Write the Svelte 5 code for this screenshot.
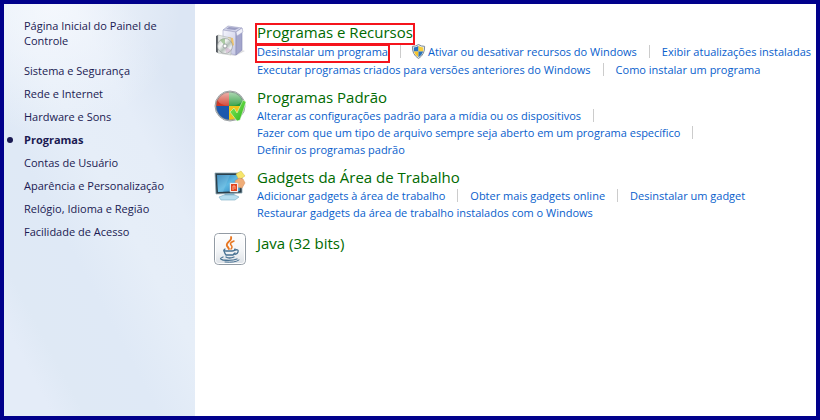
<script>
  const categories = [
    'Sistema e Segurança',
    'Rede e Internet',
    'Hardware e Sons',
    'Programas',
    'Contas de Usuário',
    'Aparência e Personalização',
    'Relógio, Idioma e Região',
    'Facilidade de Acesso'
  ]

  const current = 'Programas'

  const groups = [
    {
      icon: 'box',
      title: 'Programas e Recursos',
      marked: true,
      rows: [
        [
          { text: 'Desinstalar um programa', marked: true },
          { text: 'Ativar ou desativar recursos do Windows', shield: true },
          { text: 'Exibir atualizações instaladas' }
        ],
        [
          { text: 'Executar programas criados para versões anteriores do Windows' },
          { text: 'Como instalar um programa' }
        ]
      ]
    },
    {
      icon: 'defaults',
      title: 'Programas Padrão',
      open: true,
      rows: [
        [{ text: 'Alterar as configurações padrão para a mídia ou os dispositivos' }],
        [{ text: 'Fazer com que um tipo de arquivo sempre seja aberto em um programa específico' }],
        [{ text: 'Definir os programas padrão' }]
      ]
    },
    {
      icon: 'gadgets',
      title: 'Gadgets da Área de Trabalho',
      rows: [
        [
          { text: 'Adicionar gadgets à área de trabalho' },
          { text: 'Obter mais gadgets online' },
          { text: 'Desinstalar um gadget' }
        ],
        [{ text: 'Restaurar gadgets da área de trabalho instalados com o Windows' }]
      ]
    },
    { icon: 'java', title: 'Java (32 bits)', rows: [] }
  ]

  // a separator follows each link, and in open groups each row but the last
  const hasDivider = (group, r, i) =>
    i < group.rows[r].length - 1 || (group.open && r < group.rows.length - 1)
</script>

<div class="window">
  <nav class="sidebar">
    <a class="home" href="#home">Página Inicial do Painel de Controle</a>
    <ul>
      {#each categories as category}
        <li class:current={category === current}>
          <a href="#category">{category}</a>
        </li>
      {/each}
    </ul>
  </nav>

  <main>
    {#each groups as group}
      <section class:bare={!group.rows.length}>
        <svg class="icon" viewBox="0 0 32 32" aria-hidden="true">
          {#if group.icon === 'box'}
            <defs>
              <linearGradient id="boxFront" x1="0" y1="0" x2="1" y2="1">
                <stop offset="0" stop-color="#f4f5fc" />
                <stop offset="1" stop-color="#c6c8e4" />
              </linearGradient>
              <linearGradient id="disc" x1="0" y1="0" x2="1" y2="1">
                <stop offset="0" stop-color="#c3c6c7" />
                <stop offset=".35" stop-color="#f4f6f4" />
                <stop offset=".55" stop-color="#b3c0b8" />
                <stop offset=".75" stop-color="#f3f3f5" />
                <stop offset="1" stop-color="#a5a8ae" />
              </linearGradient>
            </defs>
            <path d="M16 30 28 25 31 26 21 31Z" fill="#b9b9c2" opacity=".5" />
            <path d="M9 5 14 1 28 3 22 7Z" fill="#d3d5ea" stroke="#9b9dc0" stroke-width=".6" />
            <path d="M12 4 15 2 25 3 21 5Z" fill="#9b9dc2" />
            <path d="M9 5 22 7V30L9 27Z" fill="url(#boxFront)" stroke="#a2a4c6" stroke-width=".6" />
            <path d="M22 7 28 3V25L22 30Z" fill="#a3a5cc" stroke="#8486b2" stroke-width=".6" />
            <path d="M22 7 28 3 29 7 23 11Z" fill="#eeeff8" stroke="#a2a4c6" stroke-width=".5" />
            <path d="M14 12 19 13 20 20 16 23Z" fill="#f1c56b" />
            <path d="M2 11 4 10V28L2 27Z" fill="#555a60" />
            <path d="M4 10 17 13V30L4 28Z" fill="#dce2df" stroke="#a4aaa8" stroke-width=".6" opacity=".8" />
            <circle cx="11" cy="21" r="7.500" fill="url(#disc)" stroke="#909696" stroke-width=".6" />
            <path d="M11 21 6 15Q8 13.500 11 13.500Z" fill="#8fbb83" opacity=".7" />
            <path d="M11 21 17 25Q15 28 12 28Z" fill="#c8a3c5" opacity=".5" />
            <circle cx="11" cy="21" r="2" fill="#fff" stroke="#8e9498" stroke-width=".8" />
          {:else if group.icon === 'defaults'}
            <defs>
              <clipPath id="ball"><circle cx="16" cy="16" r="14" /></clipPath>
              <linearGradient id="shine" x1="0" y1="0" x2="0" y2="1">
                <stop offset="0" stop-color="#fff" stop-opacity=".7" />
                <stop offset="1" stop-color="#fff" stop-opacity=".1" />
              </linearGradient>
              <linearGradient id="tick" x1="0" y1="0" x2="1" y2="1">
                <stop offset="0" stop-color="#8df05a" />
                <stop offset="1" stop-color="#25b01e" />
              </linearGradient>
            </defs>
            <circle cx="16" cy="16" r="15" fill="#e6e8e8" stroke="#9da2a5" />
            <g clip-path="url(#ball)">
              <path d="M0 0H15V16H0Z" fill="#cf3827" />
              <path d="M15 0H32V16H15Z" fill="#299a3a" />
              <path d="M0 16H15V32H0Z" fill="#1b58ad" />
              <path d="M15 16H32V32H15Z" fill="#edc51c" />
              <ellipse cx="16" cy="8" rx="13" ry="8" fill="url(#shine)" />
            </g>
            <circle cx="16" cy="16" r="14" fill="none" stroke="#777f80" stroke-width=".6" />
            <path d="M16 22 20 18 23 23 29 10 32 12 26 30 23 31Z" fill="url(#tick)" stroke="#eaffe2" stroke-width=".5" />
          {:else if group.icon === 'gadgets'}
            <defs>
              <linearGradient id="screen" x1="0" y1="0" x2="1" y2="1">
                <stop offset="0" stop-color="#2674ad" />
                <stop offset=".5" stop-color="#5fb9e2" />
                <stop offset="1" stop-color="#2a7fba" />
              </linearGradient>
            </defs>
            <path d="M11 22H20L21 27H10Z" fill="#82b5d1" />
            <path d="M5 27 10 25H21L25 27 21 30H7Z" fill="#b6def0" stroke="#7aabc5" stroke-width=".6" />
            <path d="M1 3 28 3V23L2 24Z" fill="#2b404c" stroke="#91a9b5" stroke-width=".8" />
            <path d="M3 5 26 5V21L4 22Z" fill="url(#screen)" />
            <path d="M3 5H16L9 22H4Z" fill="#8ccce8" opacity=".35" />
            <path d="M22 4 27 1 31 6 25 10Z" fill="#f7e66c" stroke="#d6bd43" stroke-width=".5" />
            <path d="M21 11 25 8 29 9 31 13 28 18 22 17Z" fill="#efad78" stroke="#d58d5d" stroke-width=".5" />
            <path d="M16 13H24V22H16Z" fill="#fff" stroke="#c7cbd0" stroke-width=".6" />
            <path d="M17 14H23V21H17Z" fill="#e24520" />
            <path d="M19 20V16H21V19" fill="none" stroke="#fbb294" />
          {:else}
            <defs>
              <linearGradient id="tile" x1="0" y1="0" x2="0" y2="1">
                <stop offset="0" stop-color="#fff" />
                <stop offset=".55" stop-color="#f3f5f7" />
                <stop offset="1" stop-color="#dce1e6" />
              </linearGradient>
            </defs>
            <rect x=".5" y=".5" width="31" height="31" rx="4" fill="url(#tile)" stroke="#929ba4" />
            <rect x="1.5" y="1.5" width="29" height="29" rx="3" fill="none" stroke="#fff" />
            <g fill="none" stroke-linecap="round">
              <path d="M17 4C19 8 11 9 13 13Q14 14 15 16" stroke="#e77722" stroke-width="1.8" />
              <path d="M20 8Q15 10 17 12T17 16" stroke="#e77722" stroke-width="1.5" />
              <path d="M11 16Q8 18 12 18H18Q21 18 21 16" stroke="#487293" stroke-width="1.3" />
              <path d="M10 18Q11 21 12 22H19L21 20" stroke="#487293" stroke-width="1.3" />
              <path d="M21 17Q25 16 24 19T20 21" stroke="#487293" stroke-width="1.3" />
              <path d="M12 24Q15 26 20 24" stroke="#487293" stroke-width="1.3" />
              <path d="M9 24Q4 26 9 27Q18 28 23 26" stroke="#487293" stroke-width="1.3" />
              <path d="M11 29Q21 30 25 27" stroke="#487293" />
            </g>
          {/if}
        </svg>

        <div class="body">
          <h2><a href="#group" class:marked={group.marked}>{group.title}</a></h2>
          {#each group.rows as row, r}
            <div class="row" class:tall={group.icon === 'box'}>
              {#each row as link, i}
                {#if link.shield}
                  <svg class="shield" viewBox="0 0 16 16" aria-hidden="true">
                    <path d="M8 .6Q11 2.5 14.5 2.5 15 11 8 15.5 1 11 1.5 2.5 5 2.5 8 .6Z" fill="#e8edf0" stroke="#788591" />
                    <path d="M8 2Q5.500 3.500 3 3.700V8H8Z" fill="#2873bf" />
                    <path d="M8 2Q10.500 3.500 13 3.700V8H8Z" fill="#f8cf3a" />
                    <path d="M3 8H8V14Q4 11.500 3 8Z" fill="#f5c42d" />
                    <path d="M13 8H8V14Q12 11.500 13 8Z" fill="#2b72b8" />
                  </svg>
                {/if}
                <a href="#task" class:marked={link.marked}>{link.text}</a>
                {#if hasDivider(group, r, i)}
                  <span class="divider"></span>
                {/if}
              {/each}
            </div>
          {/each}
        </div>
      </section>
    {/each}
  </main>
</div>

<style>
  :global(body) {
    margin: 0;
  }

  .window {
    box-sizing: border-box;
    display: flex;
    min-height: 100vh;
    border: 4px solid #00008b;
    background: #fff;
    font: 11px/17px 'Open Sans', 'Noto Sans', sans-serif;
    overflow: hidden;
  }

  a {
    color: inherit;
    text-decoration: none;
  }

  .sidebar {
    box-sizing: border-box;
    flex: 0 0 191px;
    padding: 14px 20px;
    color: #1a1a52;
    line-height: 15px;
    background:
      radial-gradient(circle at 25% 0, rgba(248, 250, 254, .8), transparent 130px),
      linear-gradient(62deg, #e4ecf8 12%, #dfe9f5 20%, #dfe9f6 38%, #e6eef8 55%, #e5edf8 70%, #dce6f4 84%);
  }

  .home {
    display: block;
    margin-bottom: 11px;
  }

  ul {
    margin: 0;
    padding: 0;
    list-style: none;
  }

  li {
    position: relative;
    line-height: 23px;
    white-space: nowrap;
  }

  .current {
    font-weight: bold;
  }

  .current::before {
    content: '';
    position: absolute;
    left: -17px;
    top: 9px;
    width: 6px;
    height: 6px;
    border-radius: 50%;
    background: #1a1a52;
  }

  main {
    flex: 1;
    min-width: 0;
    display: flex;
    flex-direction: column;
    gap: 9px;
    padding: 18px 0 0 19px;
  }

  section {
    display: flex;
    gap: 11px;
  }

  .icon {
    flex: none;
    width: 32px;
    height: 32px;
    margin-top: 3px;
  }

  .bare .body {
    padding-top: 3px;
  }

  h2 {
    margin: 0;
    color: #006a00;
    font-size: 15px;
    font-weight: normal;
    line-height: 20px;
  }

  h2 a {
    display: inline-block;
    vertical-align: top;
  }

  .row {
    display: flex;
    align-items: center;
    height: 17px;
    color: #0860cc;
    white-space: nowrap;
  }

  .tall {
    height: 18px;
  }

  .divider {
    width: 1px;
    height: 13px;
    margin: 0 12px;
    background: #ccc;
  }

  .shield {
    width: 15px;
    height: 15px;
    margin: 0 2px 0 -2px;
  }

  /* red frame drawn over the highlighted links */
  .marked {
    position: relative;
  }

  .marked::after {
    content: '';
    position: absolute;
    inset: 1px -2px -3px;
    border: 2px solid #f5141c;
    pointer-events: none;
  }
</style>
